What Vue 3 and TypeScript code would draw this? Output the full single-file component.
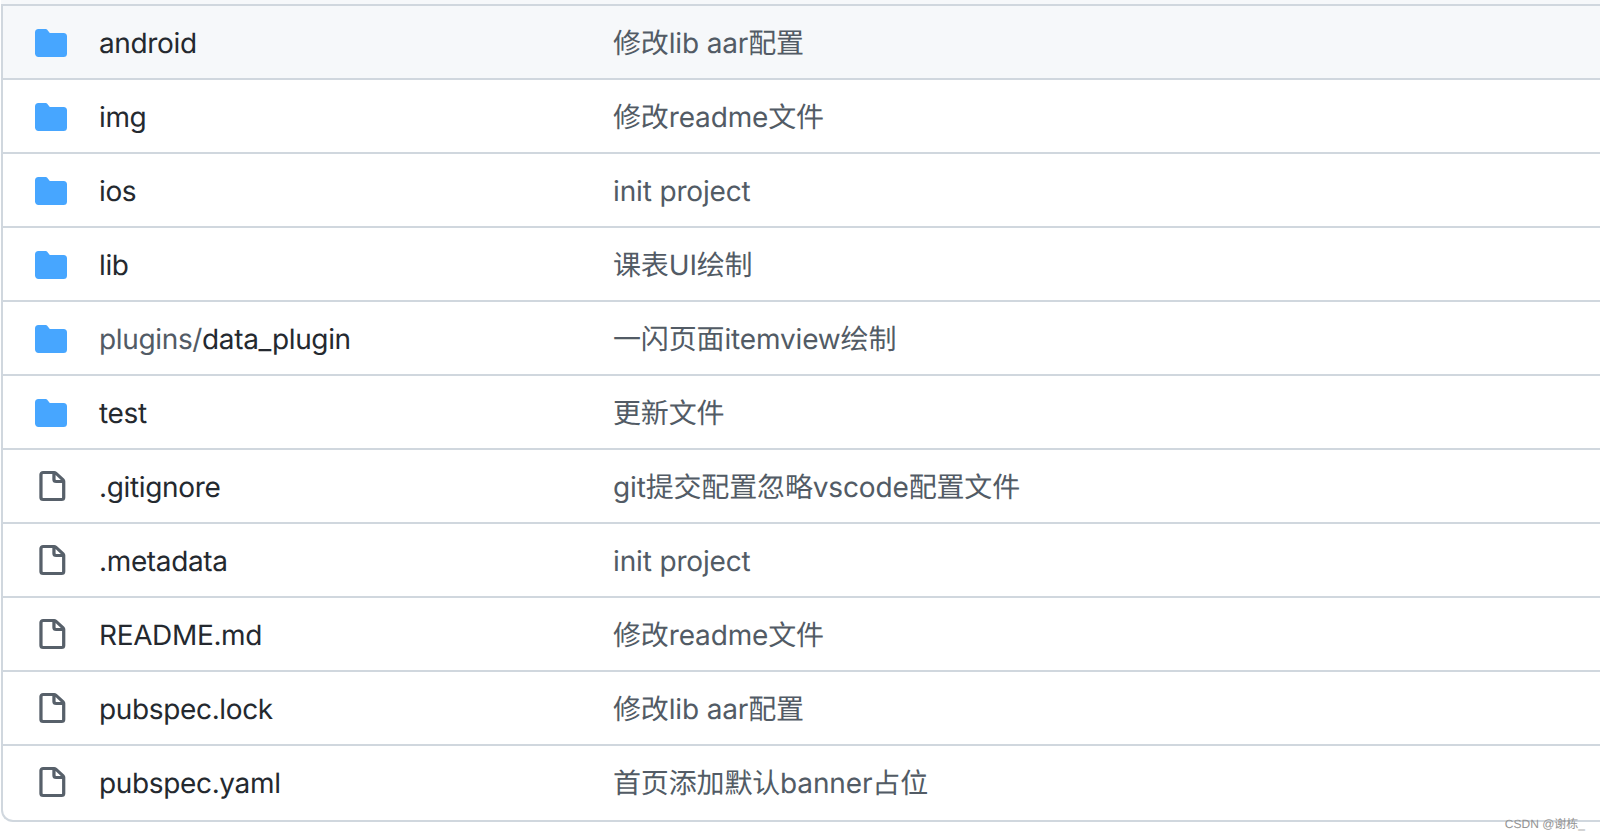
<script setup lang="ts">
interface Entry {
  prefix?: string
  name: string
  message: string
  kind: 'dir' | 'file'
}

const entries: Entry[] = [
  { name: 'android', message: '修改lib aar配置', kind: 'dir' },
  { name: 'img', message: '修改readme文件', kind: 'dir' },
  { name: 'ios', message: 'init project', kind: 'dir' },
  { name: 'lib', message: '课表UI绘制', kind: 'dir' },
  { prefix: 'plugins/', name: 'data_plugin', message: '一闪页面itemview绘制', kind: 'dir' },
  { name: 'test', message: '更新文件', kind: 'dir' },
  { name: '.gitignore', message: 'git提交配置忽略vscode配置文件', kind: 'file' },
  { name: '.metadata', message: 'init project', kind: 'file' },
  { name: 'README.md', message: '修改readme文件', kind: 'file' },
  { name: 'pubspec.lock', message: '修改lib aar配置', kind: 'file' },
  { name: 'pubspec.yaml', message: '首页添加默认banner占位', kind: 'file' },
]
</script>

<template>
  <div class="page">
    <div class="top-strip"></div>
    <div class="table">
      <div v-for="(e, i) in entries" :key="e.name" class="row" :class="{ hovered: i === 0 }">
        <div class="icon-cell">
          <svg v-if="e.kind === 'dir'" class="icon" width="32" height="32" viewBox="0 0 16 16">
            <path fill="#47a6ff" d="M1.75 1A1.75 1.75 0 000 2.75v10.5C0 14.216.784 15 1.75 15h12.5A1.75 1.75 0 0016 13.25v-8.5A1.75 1.75 0 0014.25 3H7.5a.25.25 0 01-.2-.1l-.9-1.2C6.07 1.26 5.55 1 5 1H1.75z" />
          </svg>
          <svg v-else class="icon" width="34.67" height="32" viewBox="0 0 16 16" preserveAspectRatio="none">
            <path fill="#57606a" fill-rule="evenodd" d="M3.75 1.5a.25.25 0 00-.25.25v11.5c0 .138.112.25.25.25h8.5a.25.25 0 00.25-.25V6H9.75A1.75 1.75 0 018 4.25V1.5H3.75zm5.75.56v2.19c0 .138.112.25.25.25h2.19L9.5 2.06zM2 1.75C2 .784 2.784 0 3.75 0h5.086c.464 0 .909.184 1.237.513l3.414 3.414c.329.328.513.773.513 1.237v8.086A1.75 1.75 0 0112.25 15h-8.5A1.75 1.75 0 012 13.25V1.75z" />
          </svg>
        </div>
        <div class="name"><span v-if="e.prefix" class="prefix">{{ e.prefix }}</span>{{ e.name }}</div>
        <div class="message">{{ e.message }}</div>
      </div>
    </div>
    <div class="watermark">CSDN @谢栋_</div>
  </div>
</template>

<style scoped>
.page {
  position: relative;
  width: 1600px;
  height: 840px;
  overflow: hidden;
  background: #fff;
  font-family: Inter, "Noto Sans CJK SC", sans-serif;
  text-rendering: geometricPrecision;
}
.top-strip {
  height: 4px;
  margin-left: 1px;
  background: #f6f8fa;
}
.table {
  margin-left: 1px;
  border: 2px solid #d0d7de;
  border-right: none;
  border-bottom-left-radius: 12px;
  overflow: hidden;
}
.row {
  display: grid;
  grid-template-columns: 96px 514px 1fr;
  align-items: center;
  height: 74px;
  box-shadow: inset 0 -2px #d0d7de;
  font-size: 28px;
  line-height: 36px;
}
.row:last-child {
  box-shadow: none;
}
.hovered {
  background: #f6f8fa;
}
.icon-cell {
  display: flex;
  padding-left: 32px;
}
.icon {
  display: block;
  flex: none;
}
.name {
  color: #24292f;
  letter-spacing: -0.35px;
}
.prefix,
.message {
  color: #525b65;
}
.message {
  letter-spacing: -0.15px;
}
.watermark {
  position: absolute;
  right: 15px;
  top: 815px;
  font-family: "Liberation Sans", "Noto Sans CJK SC", sans-serif;
  font-size: 12px;
  color: #949494;
  line-height: 18px;
}
</style>
